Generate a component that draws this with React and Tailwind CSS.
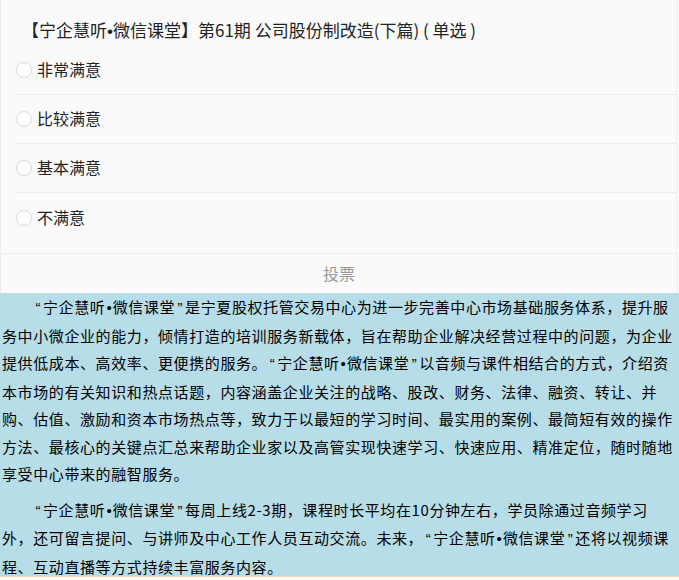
import React from "react";

const options = ["非常满意", "比较满意", "基本满意", "不满意"];

const p1 = [
  "“宁企慧听•微信课堂”是宁夏股权托管交易中心为进一步完善中心市场基础服务体系，提升服",
  "务中小微企业的能力，倾情打造的培训服务新载体，旨在帮助企业解决经营过程中的问题，为企业",
  "提供低成本、高效率、更便携的服务。“宁企慧听•微信课堂”以音频与课件相结合的方式，介绍资",
  "本市场的有关知识和热点话题，内容涵盖企业关注的战略、股改、财务、法律、融资、转让、并",
  "购、估值、激励和资本市场热点等，致力于以最短的学习时间、最实用的案例、最简短有效的操作",
  "方法、最核心的关键点汇总来帮助企业家以及高管实现快速学习、快速应用、精准定位，随时随地",
  "享受中心带来的融智服务。",
];

const p2 = [
  "“宁企慧听•微信课堂”每周上线2-3期，课程时长平均在10分钟左右，学员除通过音频学习",
  "外，还可留言提问、与讲师及中心工作人员互动交流。未来，“宁企慧听•微信课堂”还将以视频课",
  "程、互动直播等方式持续丰富服务内容。",
];

const latin = { fontFamily: '"Liberation Sans", Arial, sans-serif' };

function Rich({ text, bulletClass, quoteClass }) {
  const out = [];
  let buf = "";
  let k = 0;
  for (const ch of text) {
    if (ch === "•" || (quoteClass && (ch === "“" || ch === "”"))) {
      if (buf) out.push(<React.Fragment key={k++}>{buf}</React.Fragment>);
      buf = "";
      out.push(
        <span key={k++} className={ch === "•" ? bulletClass : quoteClass} style={latin}>
          {ch}
        </span>
      );
    } else {
      buf += ch;
    }
  }
  if (buf) out.push(<React.Fragment key={k++}>{buf}</React.Fragment>);
  return <>{out}</>;
}

function Para({ lines, className }) {
  return (
    <div className={className}>
      {lines.map((l, i) => (
        <div
          key={i}
          className={
            "whitespace-nowrap leading-[27.5px] text-[15px] tracking-[0.6px] text-black " +
            (i === 0 ? "pl-[31px]" : "")
          }
        >
          <Rich text={l} bulletClass="tracking-[0px] px-[1px]" quoteClass="tracking-[0px] px-[2.5px]" />
        </div>
      ))}
    </div>
  );
}

export default function App() {
  return (
    <div
      className="w-[679px] h-[580px] overflow-hidden bg-white"
      style={{ fontFamily: '"Noto Sans CJK SC", "Noto Sans", sans-serif' }}
    >
      <div className="w-[678px] bg-[#fafafa] border-l border-r border-[#ececec]">
        <div className="pt-[18px] pl-[21px] h-[43px] text-[17px] leading-[24px] text-[#222] whitespace-nowrap">
          <Rich text="【宁企慧听•微信课堂】第61期 公司股份制改造(下篇) ( 单选 )" bulletClass="" />
        </div>
        <div className="mt-[3px] ml-[15px] pb-[11px]">
          {options.map((o, i) => (
            <div
              key={o}
              className={
                "h-[49px] flex items-center gap-[5px] " +
                (i < options.length - 1 ? "border-b border-[#ebebeb]" : "")
              }
            >
              <span className="w-[16px] h-[16px] rounded-full border border-[#dadada] bg-white"></span>
              <span className="text-[16px] text-[#222] leading-[24px] -mt-[2px]">{o}</span>
            </div>
          ))}
        </div>
        <div className="border-t border-[#ebebeb] h-[43px] flex items-center justify-center pb-[5px] text-[16px] text-[#999]">
          投票
        </div>
      </div>
      <div className="h-[284px] bg-[#b6dde8] border-b border-[#eadcb0] px-[2px] overflow-visible">
        <Para lines={p1} className="-mt-[3px]" />
        <Para lines={p2} className="mt-[8px]" />
      </div>
    </div>
  );
}
